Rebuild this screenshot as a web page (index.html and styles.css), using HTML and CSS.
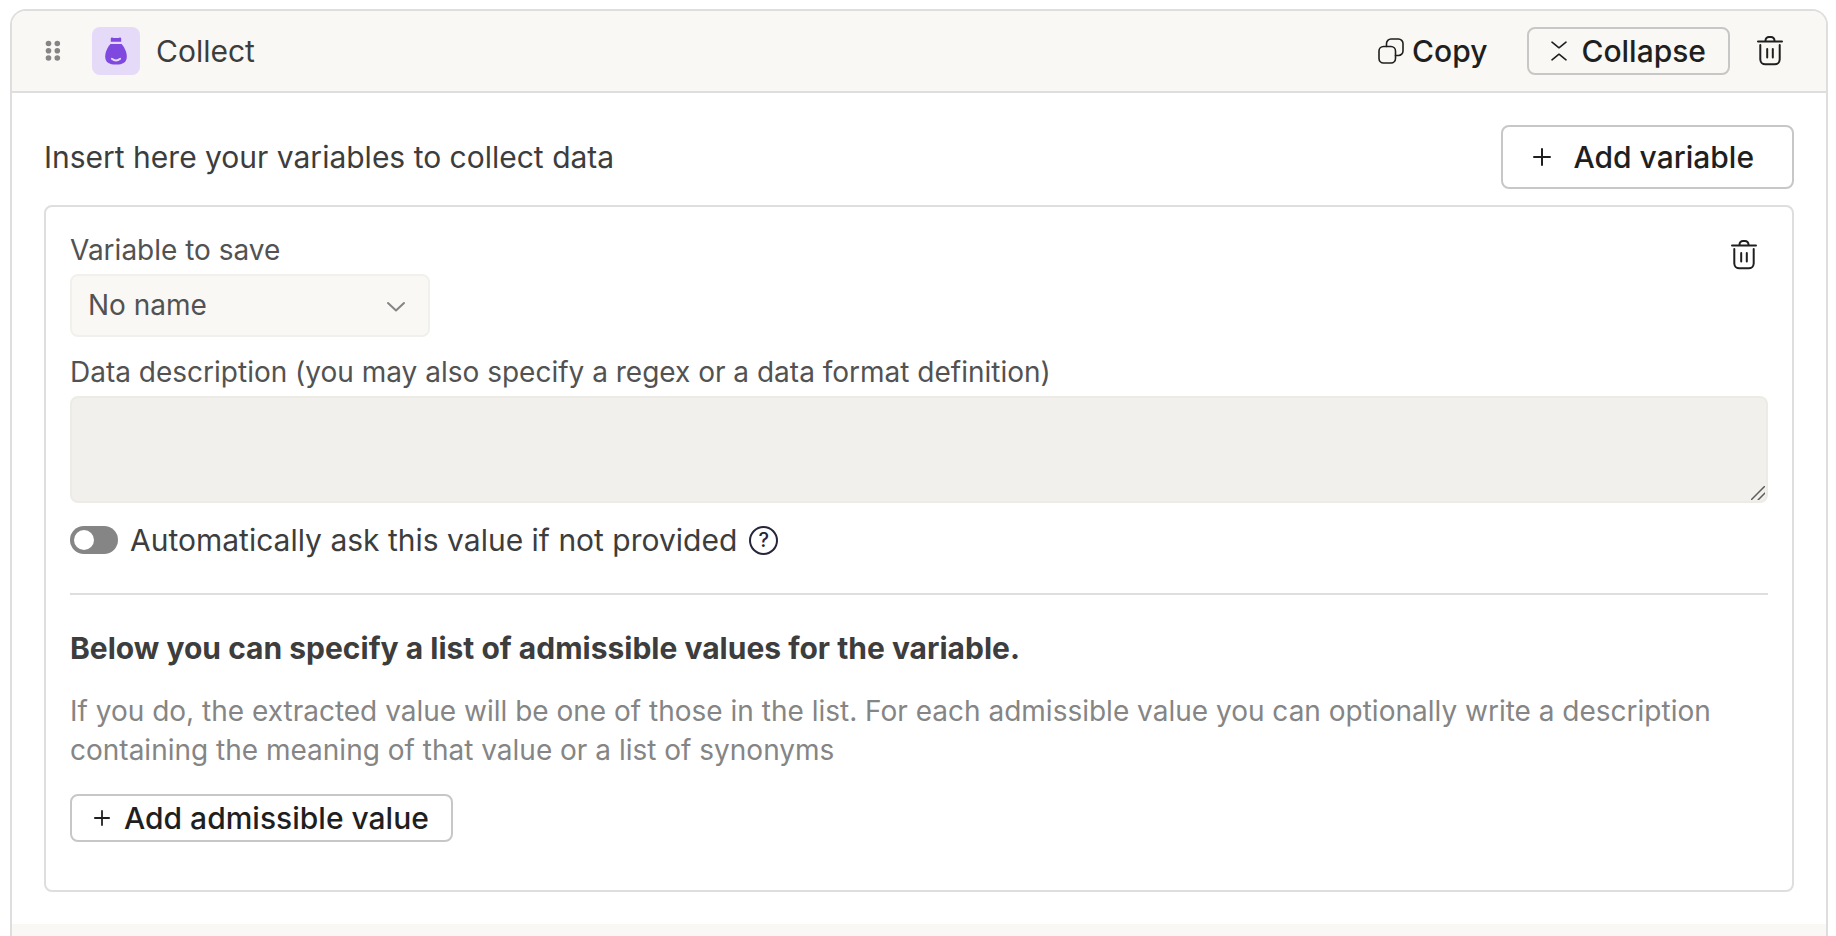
FILE: index.html
```html
<!DOCTYPE html>
<html lang="en">
<head>
<meta charset="utf-8">
<title>Collect</title>
<link rel="stylesheet" href="styles.css">
</head>
<body>
<svg class="sprite" aria-hidden="true">
  <symbol id="trash" viewBox="0 0 28 32">
    <path d="M2 6.500H26M9.500 6V5.500A3.500 3.500 0 0 1 13 2H15A3.500 3.500 0 0 1 18.500 5.500V6M4.300 10V24.500A5 5 0 0 0 9.300 29.300H18.700A5 5 0 0 0 23.700 24.500V10M11.200 14V22.500M16.800 14V22.500"/>
  </symbol>
  <symbol id="plus" viewBox="0 0 18 18"><path d="M9 1V17M1 9H17"/></symbol>
</svg>
<main class="card">
  <header class="card-header">
    <svg class="drag" viewBox="0 0 16 22" aria-hidden="true">
      <circle cx="3.500" cy="3.500" r="2.800"/><circle cx="12.300" cy="3.500" r="2.800"/>
      <circle cx="3.500" cy="10.800" r="2.800"/><circle cx="12.300" cy="10.800" r="2.800"/>
      <circle cx="3.500" cy="18" r="2.800"/><circle cx="12.300" cy="18" r="2.800"/>
    </svg>
    <span class="badge">
      <svg viewBox="0 0 48 48" aria-hidden="true">
        <path fill="#7f49e0" d="M18.800 14.800V11.500Q18.800 10.400 20 10.400Q21 10.400 21.800 11.100H26.300Q27 10.400 28 10.400Q29.200 10.400 29.200 11.500V14.800Z"/>
        <path fill="#7f49e0" d="M18.400 17H29.600C32.200 20 34.800 25 34.800 29.500C34.800 35.500 30.800 37.600 24 37.600C17.200 37.600 13.200 35.500 13.200 29.500C13.200 25 15.800 20 18.400 17Z"/>
        <path fill="none" stroke="#e5daf8" stroke-width="1.800" stroke-linecap="round" d="M19.800 31.800Q24 35.200 28.200 31.800"/>
      </svg>
    </span>
    <h1 class="title">Collect</h1>
    <div class="actions">
      <button class="btn btn-copy" type="button">
        <svg class="icon-copy" viewBox="0 0 26 26" aria-hidden="true">
          <rect x="1" y="8.500" width="16.500" height="16.500" rx="4.500"/>
          <path d="M8.500 8.500V5.500A4.500 4.500 0 0 1 13 1H20.500A4.500 4.500 0 0 1 25 5.500V13A4.500 4.500 0 0 1 20.500 17.500H17.500"/>
        </svg>
        Copy
      </button>
      <button class="btn btn-outline btn-collapse" type="button">
        <svg class="icon-collapse" viewBox="0 0 16 20" aria-hidden="true"><path d="M1 1.200L8 6.800L15 1.200M1 18.800L8 13.200L15 18.800"/></svg>
        Collapse
      </button>
      <button class="btn-icon" type="button" aria-label="Delete block"><svg class="icon-trash"><use href="#trash"/></svg></button>
    </div>
  </header>

  <div class="card-body">
    <div class="intro">
      <p class="intro-text">Insert here your variables to collect data</p>
      <button class="btn btn-outline btn-add" type="button"><svg class="icon-plus"><use href="#plus"/></svg>Add variable</button>
    </div>

    <section class="panel">
      <div class="panel-top">
        <div class="field">
          <label class="label" for="variable">Variable to save</label>
          <div class="select-wrap">
            <select id="variable" class="select"><option>No name</option></select>
            <svg class="chevron" viewBox="0 0 20 12" aria-hidden="true"><path d="M2 2L10 9.500L18 2"/></svg>
          </div>
        </div>
        <button class="btn-icon" type="button" aria-label="Delete variable"><svg class="icon-trash"><use href="#trash"/></svg></button>
      </div>

      <div class="field field-desc">
        <label class="label" for="description">Data description (you may also specify a regex or a data format definition)</label>
        <div class="area-wrap">
          <textarea id="description" class="area"></textarea>
          <svg class="grip" viewBox="0 0 14 14" aria-hidden="true"><path d="M0 14L14 0M7 14L14 7"/></svg>
        </div>
      </div>

      <div class="auto">
        <input id="auto-ask" class="switch" type="checkbox" role="switch">
        <label class="auto-label" for="auto-ask">Automatically ask this value if not provided</label>
        <button class="help" type="button" aria-label="Help">?</button>
      </div>

      <hr class="rule">

      <h2 class="heading">Below you can specify a list of admissible values for the variable.</h2>
      <p class="hint">If you do, the extracted value will be one of those in the list. For each admissible value you can optionally write a description containing the meaning of that value or a list of synonyms</p>
      <button class="btn btn-outline btn-admissible" type="button"><svg class="icon-plus-small" viewBox="0 0 18 18"><use href="#plus"/></svg>Add admissible value</button>
    </section>
  </div>
  <footer class="card-footer"></footer>
</main>
</body>
</html>
```
FILE: styles.css
```css
* { box-sizing: border-box; }
html { height: 100%; }
body {
  display: flex;
  flex-direction: column;
  margin: 0;
  min-height: 100%;
  padding: 9px 8px 0 10px;
  background: #fff;
  color: #3d3d3d;
  font-family: Inter, "Liberation Sans", sans-serif;
  font-size: 30px;
  line-height: 40px;
}
h1, h2, p { margin: 0; font-size: inherit; font-weight: 400; }
button, select, textarea { font: inherit; color: inherit; }
button { padding: 0; border: 0; background: none; cursor: pointer; }
svg { flex: none; fill: none; stroke: #1f1f1f; stroke-width: 2; stroke-linecap: round; stroke-linejoin: round; }
.sprite { position: absolute; width: 0; height: 0; }

.card {
  display: flex;
  flex: 1;
  flex-direction: column;
  border: 2px solid #dedede;
  border-bottom: 0;
  border-radius: 16px 16px 0 0;
  overflow: hidden;
}
.card-header {
  display: flex;
  align-items: center;
  height: 82px;
  padding: 0 42px 0 33px;
  background: #f9f8f4;
  border-bottom: 2px solid #dedede;
}
.drag { width: 16px; height: 22px; fill: #858585; stroke: none; }
.badge { display: flex; width: 48px; height: 48px; margin-left: 31px; border-radius: 8px; background: #e5daf8; }
.badge svg { width: 48px; height: 48px; stroke: none; }
.title { margin-left: 16px; }
.actions { display: flex; align-items: center; margin-left: auto; }

.btn { display: flex; align-items: center; color: #1f1f1f; font-weight: 500; white-space: nowrap; }
.btn-outline { border: 2px solid #c7c7c7; border-radius: 8px; }
.btn-copy { gap: 8px; margin-right: 40px; }
.btn-collapse { gap: 14px; height: 48px; padding: 0 22px; margin-right: 26px; }
.btn-icon { display: flex; }
.icon-copy { width: 26px; height: 26px; stroke-width: 1.6; }
.icon-collapse { width: 16px; height: 20px; stroke-width: 1.6; }
.icon-trash { width: 28px; height: 32px; }
.icon-plus { width: 18px; height: 18px; }
.icon-plus-small { width: 16px; height: 16px; }

.card-body { padding: 32px; }
.intro { display: flex; align-items: center; justify-content: space-between; margin-bottom: 16px; }
.btn-add { gap: 22px; height: 64px; padding: 0 38px 0 30px; }

.panel { padding: 24px 24px 48px; border: 2px solid #dedede; border-radius: 8px; }
.panel-top { display: flex; justify-content: space-between; align-items: flex-start; }
.panel-top .btn-icon { margin: 8px 10px 0 0; }
.field { display: flex; flex-direction: column; gap: 5px; }
.field-desc { margin-top: 16px; }
.label { font-size: 28px; line-height: 38px; color: #525252; }
.select-wrap { position: relative; display: flex; width: 360px; }
.select {
  width: 100%;
  height: 63px;
  padding: 0 56px 2px 16px;
  appearance: none;
  border: 2px solid #f1f0ec;
  border-radius: 8px;
  background: #f9f8f4;
  color: #525252;
  font-size: 28px;
}
.chevron { position: absolute; right: 24px; top: 27px; width: 20px; height: 12px; stroke: #858585; pointer-events: none; }
.area-wrap { position: relative; display: flex; }
.area {
  width: 100%;
  height: 107px;
  padding: 12px 16px;
  resize: none;
  border: 2px solid #ecebe6;
  border-radius: 8px;
  background: #f1f0ec;
}
.grip { position: absolute; right: 3px; bottom: 3px; width: 14px; height: 14px; stroke: #5c5c5c; stroke-width: 1.5; }

.auto { display: flex; align-items: center; margin-top: 17px; }
.switch {
  display: flex;
  align-items: center;
  appearance: none;
  width: 48px;
  height: 28px;
  margin: 0;
  padding: 4px;
  border-radius: 14px;
  background: #858585;
}
.switch::before { content: ""; width: 20px; height: 20px; border-radius: 50%; background: #fff; }
.switch:checked { justify-content: flex-end; background: #7f49e0; }
.auto-label { margin-left: 12px; }
.help {
  width: 29px;
  height: 29px;
  margin-left: 12px;
  border: 2px solid #26263a;
  border-radius: 50%;
  color: #26263a;
  font-size: 20px;
  font-weight: 500;
  line-height: 24px;
}

.rule { width: 100%; margin: 33px 0; border: 0; border-top: 2px solid #dedede; }
.heading { font-weight: 700; }
.hint { margin-top: 24px; font-size: 28px; line-height: 39px; color: #858585; }
.btn-admissible { gap: 14px; height: 48px; margin-top: 24px; padding: 0 22px; }
.card-footer { flex: 1; background: #f9f8f4; }
```
